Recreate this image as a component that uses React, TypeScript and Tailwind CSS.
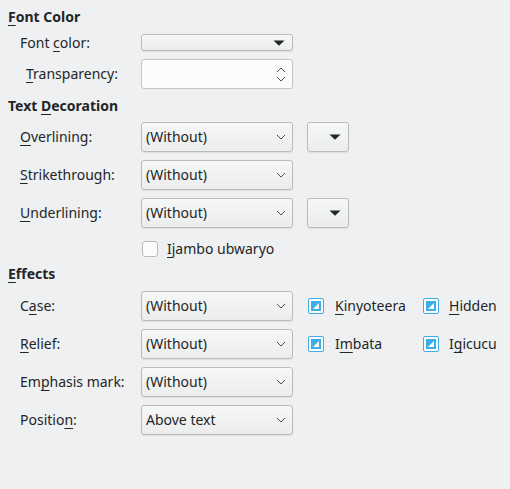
import React from "react";

const U = ({ children }: { children: React.ReactNode }) => (
  <span className="underline underline-offset-[3px] decoration-1 [text-decoration-skip-ink:none]">{children}</span>
);

const Chevron = () => (
  <svg width="10" height="6" viewBox="0 0 10 6" className="shrink-0">
    <path d="M1 1 L5 5 L9 1" fill="none" stroke="#4d4f51" strokeWidth="1" />
  </svg>
);

const Combo = ({ value }: { value: string }) => (
  <div className="w-[152px] h-[30px] flex items-center justify-between pl-[4px] pr-[6px] rounded-[3px] border border-[#b9bbbd] bg-gradient-to-b from-[#f6f7f7] to-[#ebecec] shadow-[0_1px_1px_rgba(0,0,0,0.08)]">
    <span>{value}</span>
    <Chevron />
  </div>
);

const Tri = () => (
  <svg width="12" height="6" viewBox="0 0 12 6">
    <polygon points="0.5,0.5 11.5,0.5 6,5.8" fill="#232627" />
  </svg>
);

const SmallBtn = () => (
  <div className="w-[42px] h-[30px] flex items-center justify-end pr-[7px] rounded-[3px] border border-[#b9bbbd] bg-gradient-to-b from-[#f6f7f7] to-[#ebecec] shadow-[0_1px_1px_rgba(0,0,0,0.08)]">
    <Tri />
  </div>
);

const TriCheck = () => (
  <div className="w-[16px] h-[16px] rounded-[2px] border border-[#3daee9] bg-[#fcfcfc] flex items-center justify-center shrink-0">
    <svg width="10" height="10" viewBox="0 0 10 10">
      <rect x="0" y="0" width="10" height="10" fill="#3daee9" />
      <polygon points="8,2 8,8 2,8" fill="#fcfcfc" />
    </svg>
  </div>
);

const Row = ({ label, children, mt = "mt-[8px]" }: { label: React.ReactNode; children: React.ReactNode; mt?: string }) => (
  <div className={`flex items-center h-[30px] ${mt}`}>
    <div className="w-[141px] pl-[20px]">{label}</div>
    {children}
  </div>
);

export default function App() {
  return (
    <div
      className="w-[510px] h-[489px] bg-[#eff0f1] text-[#232627] text-[14px] leading-[18px] pt-[8px]"
      style={{ fontFamily: '"Noto Sans", sans-serif' }}
    >
      <div className="pl-[8px] h-[18px] font-bold"><U>F</U>ont Color</div>

      <div className="flex items-center h-[17px] mt-[8px]">
        <div className="w-[141px] pl-[20px]">Font <U>c</U>olor:</div>
        <div className="w-[152px] h-[17px] flex items-center justify-end pr-[7px] rounded-[3px] border border-[#b9bbbd] bg-gradient-to-b from-[#f6f7f7] to-[#ebecec] shadow-[0_1px_1px_rgba(0,0,0,0.08)]">
          <Tri />
        </div>
      </div>

      <div className="flex items-center h-[30px] mt-[8px]">
        <div className="w-[141px] pl-[26px]"><U>T</U>ransparency:</div>
        <div className="w-[152px] h-[30px] flex items-center justify-end pr-[6px] rounded-[3px] border border-[#c2c4c6] bg-[#fcfcfc]">
          <div className="flex flex-col items-center gap-[3px]">
            <svg width="10" height="6" viewBox="0 0 10 6">
              <path d="M1 5 L5 1 L9 5" fill="none" stroke="#4d4f51" strokeWidth="1" />
            </svg>
            <svg width="10" height="6" viewBox="0 0 10 6">
              <path d="M1 1 L5 5 L9 1" fill="none" stroke="#4d4f51" strokeWidth="1" />
            </svg>
          </div>
        </div>
      </div>

      <div className="pl-[8px] h-[18px] mt-[8px] font-bold">Text <U>D</U>ecoration</div>

      <Row label={<><U>O</U>verlining:</>} mt="mt-[7px]">
        <Combo value="(Without)" />
        <div className="ml-[14px]"><SmallBtn /></div>
      </Row>
      <Row label={<><U>S</U>trikethrough:</>}>
        <Combo value="(Without)" />
      </Row>
      <Row label={<><U>U</U>nderlining:</>}>
        <Combo value="(Without)" />
        <div className="ml-[14px]"><SmallBtn /></div>
      </Row>

      <div className="flex items-center h-[16px] mt-[13px] pl-[142px]">
        <div className="w-[16px] h-[16px] rounded-[3px] border border-[#b9bbbd] bg-[#fcfcfc]" />
        <span className="ml-[9px]"><U>I</U>jambo ubwaryo</span>
      </div>

      <div className="pl-[8px] h-[18px] mt-[8px] font-bold"><U>E</U>ffects</div>

      <Row label={<>C<U>a</U>se:</>}>
        <Combo value="(Without)" />
        <div className="flex items-center ml-[15px] w-[115px]">
          <TriCheck />
          <span className="ml-[11px]"><U>K</U>inyoteera</span>
        </div>
        <div className="flex items-center">
          <TriCheck />
          <span className="ml-[10px]"><U>H</U>idden</span>
        </div>
      </Row>
      <Row label={<><U>R</U>elief:</>}>
        <Combo value="(Without)" />
        <div className="flex items-center ml-[15px] w-[115px]">
          <TriCheck />
          <span className="ml-[11px]">I<U>m</U>bata</span>
        </div>
        <div className="flex items-center">
          <TriCheck />
          <span className="ml-[10px]">I<U>g</U>icucu</span>
        </div>
      </Row>
      <Row label={<>Em<U>p</U>hasis mark:</>}>
        <Combo value="(Without)" />
      </Row>
      <Row label={<>Positio<U>n</U>:</>}>
        <Combo value="Above text" />
      </Row>
    </div>
  );
}
